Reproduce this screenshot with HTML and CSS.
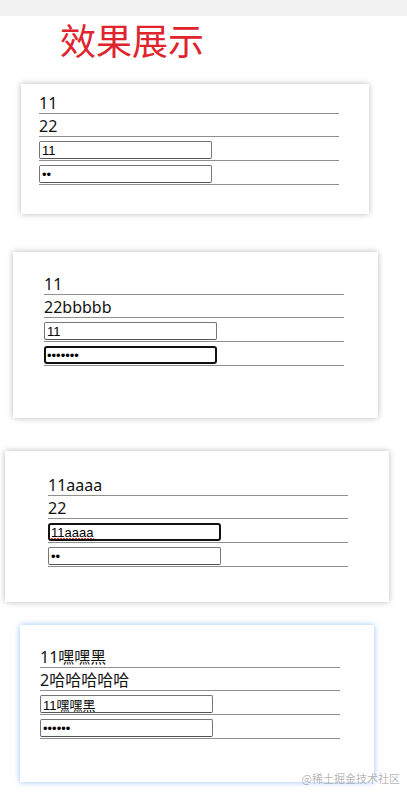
FILE: index.html
```html
<!DOCTYPE html>
<html lang="zh-CN">
<head>
    <meta charset="UTF-8">
    <meta name="viewport" content="width=device-width, initial-scale=1.0">
    <title>效果展示</title>
    <link rel="stylesheet" href="styles.css">
</head>
<body>
    <div class="topbar"></div>
    <h1 class="title">效果展示</h1>

    <div class="card card-1">
        <div class="row">11</div>
        <div class="row">22</div>
        <div class="row row-input"><input type="text" value="11"></div>
        <div class="row row-input"><input type="password" value="11"></div>
    </div>

    <div class="card card-2">
        <div class="row">11</div>
        <div class="row">22bbbbb</div>
        <div class="row row-input"><input type="text" value="11"></div>
        <div class="row row-input"><input class="focused" type="password" value="1234567"></div>
    </div>

    <div class="card card-3">
        <div class="row">11aaaa</div>
        <div class="row">22</div>
        <div class="row row-input"><input class="focused misspelled" type="text" value="11aaaa"></div>
        <div class="row row-input"><input type="password" value="22"></div>
    </div>

    <div class="card card-4">
        <div class="row">11嘿嘿黑</div>
        <div class="row">2哈哈哈哈哈</div>
        <div class="row row-input"><input type="text" value="11嘿嘿黑"></div>
        <div class="row row-input"><input type="password" value="123456"></div>
    </div>

    <div class="watermark">@稀土掘金技术社区</div>
</body>
</html>
```

FILE: styles.css
```css
body {
    margin: 0;
    background-color: #fff;
    font-family: "Noto Sans", "Noto Sans CJK SC", sans-serif;
    color: #111;
    position: relative;
    min-height: 794px;
}
.topbar {
    height: 16px;
    background-color: #f2f2f2;
}
.title {
    margin: 0 0 18px 60px;
    height: 50px;
    line-height: 46px;
    font-size: 36px;
    font-weight: normal;
    color: #e0242e;
    font-family: "Noto Sans CJK SC", sans-serif;
}
.card {
    background-color: #fff;
    box-sizing: border-box;
    box-shadow: 0 0 6px rgba(0, 0, 0, 0.28);
}
.card-1 {
    margin-left: 21px;
    width: 348px;
    height: 130px;
    padding: 7px 0 0 18px;
}
.card-2 {
    margin: 38px 0 0 13px;
    width: 365px;
    height: 166px;
    padding: 20px 0 0 31px;
}
.card-3 {
    margin: 33px 0 0 5px;
    width: 384px;
    height: 151px;
    padding: 22px 0 0 43px;
}
.card-4 {
    margin: 23px 0 0 20px;
    width: 354px;
    height: 157px;
    padding: 20px 0 0 20px;
    box-shadow: 0 0 6px rgba(70, 140, 255, 0.55);
}
.row {
    width: 300px;
    height: 22px;
    line-height: 24px;
    font-size: 16px;
    border-bottom: 1px solid #8f8f8f;
}
.row-input {
    height: 19px;
    padding-top: 4px;
}
.row input {
    display: block;
    box-sizing: border-box;
    margin: 0;
    width: 173px;
    height: 18px;
    padding: 0 2px;
    border: 1px solid #767676;
    border-bottom-color: #555;
    border-radius: 2px;
    font-family: "Liberation Sans", "Noto Sans CJK SC", sans-serif;
    font-size: 13px;
    color: #000;
    background-color: #fff;
    outline: none;
}
.row input.focused {
    border: 2px solid #111;
    border-radius: 3px;
    padding: 0 1px;
}
/* spell-check squiggle under the typed word */
.row input.misspelled {
    background-image: repeating-linear-gradient(90deg, #e33 0 2px, transparent 2px 3px);
    background-size: 43px 1px;
    background-position: 1px 13px;
    background-repeat: no-repeat;
}
.watermark {
    position: absolute;
    right: 7px;
    top: 770px;
    font-size: 11px;
    color: rgba(120, 120, 120, 0.55);
    font-family: "Noto Sans CJK SC", sans-serif;
}
```
